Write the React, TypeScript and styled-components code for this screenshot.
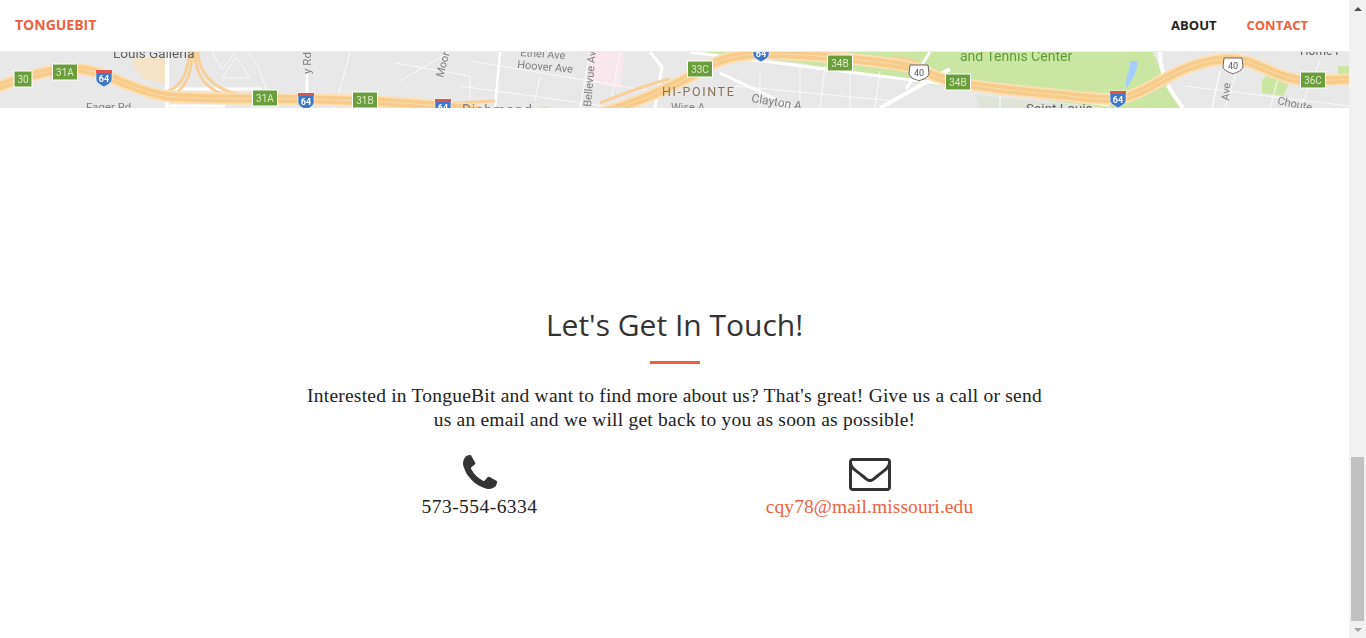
import styled, { createGlobalStyle } from 'styled-components';

const GlobalStyle = createGlobalStyle`
  html, body {
    margin: 0;
    height: 100%;
    overflow: hidden;
    background: #fff;
  }
`

const Page = styled.div`
  display: flex;
  width: 1366px;
  height: 638px;
  overflow: hidden;
`
const Main = styled.div`
  width: 1349px;
  display: flex;
  flex-direction: column;
`

// navbar
const Nav = styled.nav`
  height: 49px;
  padding: 0 41px 2px 15px;
  border-bottom: 1px solid #ececec;
  display: flex;
  align-items: center;
  justify-content: space-between;
  font-family: "Open Sans", sans-serif;
  font-weight: 700;
  font-size: 13px;
  text-transform: uppercase;
`
const Brand = styled.a`
  color: #f05f40;
  font-size: 14px;
`
const NavLinks = styled.ul`
  display: flex;
  gap: 30px;
  margin: 0;
  padding: 0;
  list-style: none;
`
const NavLink = styled.li<{ $active?: boolean }>`
  color: ${({ $active }) => ($active ? '#f05f40' : '#222')};
`

// map strip
const MapStrip = styled.svg`
  display: block;
  width: 1349px;
  height: 56px;
  flex: none;
  background: #e8e8e8;
  font-family: Roboto, sans-serif;
`
const MapSoft = styled.g`
  filter: blur(0.45px);
`

// contact section
const Contact = styled.section`
  display: flex;
  flex-direction: column;
  align-items: center;
  padding-top: 197px;
  color: #222;
`
const Title = styled.h2`
  margin: 0;
  font-family: "Open Sans", sans-serif;
  font-weight: 400;
  font-size: 30px;
  line-height: 40px;
  color: #333;
`
const Divider = styled.hr`
  width: 50px;
  height: 3px;
  margin: 16px 0 20px;
  border: 0;
  background: #f05f40;
`
const Lead = styled.p`
  margin: 0;
  width: 770px;
  text-align: center;
  font-family: "Liberation Serif", serif;
  font-size: 19.5px;
  line-height: 24px;
  letter-spacing: 0.22px;
`
const Columns = styled.div`
  display: grid;
  grid-template-columns: 390px 390px;
  margin-top: 21px;
`
const Column = styled.div`
  display: flex;
  flex-direction: column;
  align-items: center;
  font-family: "Liberation Serif", serif;
  font-size: 19.5px;
  line-height: 24px;
`
const IconSlot = styled.div<{ $lift?: number }>`
  height: 42px;
  box-sizing: border-box;
  padding-bottom: ${({ $lift }) => $lift || 0}px;
  display: flex;
  align-items: center;
  color: #333;
`
const IconSvg = styled.svg`
  display: block;
  fill: currentColor;
`
const PhoneNumber = styled.span`
  letter-spacing: 0.45px;
`
const MailLink = styled.a`
  color: #f05f40;
  letter-spacing: 0.1px;
`

// browser scrollbar
const Scrollbar = styled.aside`
  width: 17px;
  height: 638px;
  background: #f1f1f1;
  display: flex;
  flex-direction: column;
  align-items: center;
`
const ArrowCell = styled.div`
  height: 17px;
  display: flex;
  align-items: center;
  justify-content: center;
  flex: none;
`
const ArrowUp = styled.span`
  border-left: 4px solid transparent;
  border-right: 4px solid transparent;
  border-bottom: 4px solid #505050;
`
const ArrowDown = styled.span`
  border-left: 4px solid transparent;
  border-right: 4px solid transparent;
  border-top: 4px solid #a3a3a3;
`
const Track = styled.div`
  flex: 1;
  width: 100%;
  display: flex;
  justify-content: center;
  align-items: flex-end;
`
const Thumb = styled.div`
  width: 13px;
  height: 164px;
  background: #c1c1c1;
`

const PhoneGlyph = () => (
  <IconSvg width={34} height={34} viewBox="192 128 1408 1408">
    <path d="M1600 1240q0 27-10 70.5t-21 68.5q-21 50-122 106-94 51-186 51-27 0-52.5-3.5t-57.5-12.5-47.5-14.5-55.5-20.5-49-18q-98-35-175-83-128-79-264.5-215.5t-215.5-264.5q-48-77-83-175-3-9-18-49t-20.5-55.5-14.5-47.5-12.5-57.5-3.5-52.5q0-92 51-186 56-101 106-122 25-11 68.5-21t70.5-10q14 0 21 3 18 6 53 76 11 19 30 54t35 63.5 31 53.5q3 4 17.5 25t21.5 35.5 7 28.5q0 20-28.5 50t-62 55-62 53-28.5 46q0 9 5 22.5t8.5 20.5 14 24 11.5 19q76 137 174 235t235 174q2 1 19 11.5t24 14 20.5 8.5 22.5 5q18 0 46-28.5t53-62 55-62 50-28.5q14 0 28.5 7t35.5 21.5 25 17.5q25 15 53.5 31t63.5 35 54 30q70 35 76 53 3 7 3 21z" />
  </IconSvg>
)

const MailGlyph = () => (
  <IconSvg width={42} height={33} viewBox="0 128 1792 1408">
    <path d="M1664 1376v-768q-32 36-69 66-268 206-426 338-51 43-83 67t-86.5 48.5-102.5 24.5h-2q-48 0-102.5-24.5t-86.5-48.5-83-67q-158-132-426-338-37-30-69-66v768q0 13 9.5 22.5t22.5 9.5h1472q13 0 22.5-9.5t9.5-22.5zm0-1051v-24.5l-.5-13-3-12.5-5.5-9-9-7.5-14-2.5h-1472q-13 0-22.5 9.5t-9.5 22.5q0 168 147 284 193 152 401 317 6 5 35 29.5t46 37.5 44.5 31.5 50.5 27.5 43 9h2q20 0 43-9t50.5-27.5 44.5-31.5 46-37.5 35-29.5q208-165 401-317 54-43 100.5-115.5t46.5-131.5zm128-37v1088q0 66-47 113t-113 47h-1472q-66 0-113-47t-47-113v-1088q0-66 47-113t113-47h1472q66 0 113 47t47 113z" />
  </IconSvg>
)

// map data, coordinates are page pixels
const highways = [
  'M-5 87 C 20 78, 45 68, 75 68 C 105 68, 125 88, 165 95 C 200 99, 260 97, 305 98 C 360 100, 420 101, 480 110',
  'M600 112 C 640 102, 680 82, 715 62 C 740 50, 780 52, 830 56 C 870 60, 905 63, 925 70 C 945 84, 1000 88, 1060 94 C 1095 98, 1115 100, 1130 95 C 1160 84, 1180 62, 1225 58 C 1260 57, 1270 78, 1310 80 L 1355 78',
];
const ramps = [
  'M160 92 C 178 90, 188 76, 189 51',
  'M168 97 C 184 90, 192 76, 192 51',
  'M195 51 C 195 74, 205 90, 232 96',
  'M198 51 C 198 70, 212 88, 240 94',
  'M1126 96 C 1145 90, 1150 80, 1170 70',
  'M1165 84 C 1180 70, 1200 68, 1225 60',
  'M600 102 C 625 92, 650 82, 670 78',
  'M455 102 L 495 100',
  'M885 58 C 895 56, 905 56, 920 62',
];
const mainRoads: [string, number][] = [
  ['M167 51 V 107', 4],
  ['M172 88 H 262', 3],
  ['M170 105 H 225', 3],
  ['M307 72 V 107', 3],
  ['M500 51 L 495 107', 2.5],
  ['M650 51 L 662 66 L 655 107', 3],
  ['M690 51 L 1109 104', 3],
  ['M720 72 L 790 105', 3],
  ['M880 107 L 950 68', 4],
  ['M906 88 L 930 51', 3],
  ['M1160 51 C 1160 75, 1170 90, 1183 107', 4],
];
const sideRoads: [string, number][] = [
  ['M212 51 L 222 68 L 236 51', 1],
  ['M222 77 L 236 56 L 250 77 Z', 1],
  ['M248 51 C 258 62, 262 75, 266 88', 1],
  ['M350 51 L 335 107', 1],
  ['M395 62 L 470 75 L 470 100', 1],
  ['M400 80 L 450 51', 1],
  ['M470 60 L 650 90', 1],
  ['M460 85 L 640 110', 1],
  ['M540 75 L 535 100', 1],
  ['M590 51 L 580 107', 1.2],
  ['M620 51 L 612 95', 1],
  ['M760 70 V 107', 1],
  ['M800 65 V 107', 1],
  ['M825 65 L 820 107', 1],
  ['M850 68 V 107', 1],
  ['M880 70 L 875 107', 1],
  ['M735 85 L 895 100', 1],
  ['M1000 95 V 107', 1],
  ['M1220 70 L 1212 107', 1.5],
  ['M1185 85 L 1349 105', 1],
  ['M1240 58 L 1225 107', 1],
  ['M1280 70 L 1270 107', 1],
  ['M1320 60 L 1300 107', 1],
];
const greenSigns: [number, number, string][] = [
  [23, 78, '30'],
  [65, 71, '31A'],
  [265, 97, '31A'],
  [365, 99, '31B'],
  [700, 68, '33C'],
  [840, 62, '34B'],
  [958, 81, '34B'],
  [1313, 79, '36C'],
];
const interstates: [number, number][] = [
  [104, 77],
  [306, 100],
  [443, 106],
  [761, 52],
  [1118, 98],
];
const usShields: [number, number][] = [
  [919, 71],
  [1233, 64],
];

const MapLabel = styled.text<{ $color?: string; $size?: number; $spacing?: number }>`
  fill: ${({ $color }) => $color || '#808080'};
  font-size: ${({ $size }) => $size || 11}px;
  letter-spacing: ${({ $spacing }) => $spacing || 0}px;
`

const MapImage = () => (
  <MapStrip viewBox="0 51 1349 56">
    <MapSoft>
      {/* park and other land */}
      <polygon points="690,51 1153,51 1166,80 1183,107 1106,107 906,80 800,62" fill="#cbe6a3" />
      <polygon points="975,94 1106,107 980,107" fill="#e0e4d8" />
      <polygon points="1262,80 1270,70 1290,80 1283,95 1262,92" fill="#cbe6a3" />
      <polygon points="1338,65 1349,65 1349,78 1338,78" fill="#cbe6a3" />
      <polygon points="590,51 625,51 620,88 590,80" fill="#f8e8ee" />
      <polygon points="133,57 167,57 167,83 145,78 133,66" fill="#f5e3c8" />
      <polygon points="540,105 552,106 545,107" fill="#cbe6a3" />
      <path d="M1130 60 L 1137 60 C 1138 70, 1132 80, 1126 87 C 1125 78, 1130 70, 1130 60 Z" fill="#a3ccff" />

      {sideRoads.map(([d, w], i) => (
        <path key={i} d={d} stroke="#fafafa" strokeWidth={w} fill="none" />
      ))}
      {mainRoads.map(([d, w], i) => (
        <path key={i} d={d} stroke="#fff" strokeWidth={w} fill="none" />
      ))}

      {ramps.map((d, i) => (
        <path key={i} d={d} stroke="#f8cf96" strokeWidth={3} fill="none" />
      ))}
      {highways.map((d, i) => (
        <g key={i} fill="none">
          <path d={d} stroke="#fbdfb5" strokeWidth={12} />
          <path d={d} stroke="#f8cb8a" strokeWidth={8} />
          <path d={d} stroke="#fbdcae" strokeWidth={1} />
        </g>
      ))}

      <MapLabel x={113} y={57} $size={13.5} $color="#5f5f5f">Louis Galleria</MapLabel>
      <MapLabel x={86} y={110} $size={11.5}>Fager Rd</MapLabel>
      <MapLabel x={311} y={73} transform="rotate(-90 311 73)" $size={11.5}>y Rd</MapLabel>
      <MapLabel x={443} y={77} transform="rotate(-75 443 77)" $size={11}>Moorla</MapLabel>
      <MapLabel x={462} y={114} $size={14} $spacing={1}>Richmond</MapLabel>
      <MapLabel x={520} y={55} transform="rotate(4 520 55)" $size={11}>Ethel Ave</MapLabel>
      <MapLabel x={517} y={67} transform="rotate(5 517 67)" $size={11}>Hoover Ave</MapLabel>
      <MapLabel x={591} y={106} transform="rotate(-85 591 106)" $size={11}>Bellevue Ave</MapLabel>
      <MapLabel x={662} y={95} $size={12.5} $spacing={1.6} $color="#8a7358">HI-POINTE</MapLabel>
      <MapLabel x={751} y={101} transform="rotate(9 751 101)" $size={12}>Clayton A</MapLabel>
      <MapLabel x={671} y={110} $size={11}>Wise A</MapLabel>
      <MapLabel x={960} y={60} $size={14} $color="#5e9a3c">and Tennis Center</MapLabel>
      <MapLabel x={1026} y={112} $size={13.5} $color="#5f5f5f">Saint Louis</MapLabel>
      <MapLabel x={1229} y={100} transform="rotate(-85 1229 100)" $size={11}>Ave</MapLabel>
      <MapLabel x={1277} y={103} transform="rotate(12 1277 103)" $size={11}>Choute</MapLabel>
      <MapLabel x={1300} y={54} $size={12} $color="#5f5f5f">Home F</MapLabel>

      {greenSigns.map(([x, y, label]) => {
        const w = label.length > 2 ? 25 : 18;
        return (
          <g key={`${x}-${label}`}>
            <rect x={x - w / 2} y={y - 8} width={w} height={16} fill="#6a9e3d" stroke="#fff" strokeWidth={1} />
            <text x={x} y={y + 3.5} textAnchor="middle" fontSize={10} fill="#dcebc8">{label}</text>
          </g>
        );
      })}
      {interstates.map(([x, y]) => (
        <g key={x}>
          <path d={`M${x - 8} ${y - 8} H${x + 8} V${y + 1} C${x + 8} ${y + 5}, ${x + 3} ${y + 7}, ${x} ${y + 9} C${x - 3} ${y + 7}, ${x - 8} ${y + 5}, ${x - 8} ${y + 1} Z`} fill="#3d78c9" stroke="#fff" strokeWidth={0.6} />
          <rect x={x - 8} y={y - 8} width={16} height={3} fill="#d9534f" />
          <text x={x} y={y + 4} textAnchor="middle" fontSize={9} fontWeight={700} fill="#fff">64</text>
        </g>
      ))}
      {usShields.map(([x, y]) => (
        <g key={x}>
          <path d={`M${x - 9} ${y - 7} H${x + 9} L${x + 10} ${y + 2} C${x + 8} ${y + 7}, ${x + 3} ${y + 7}, ${x} ${y + 9} C${x - 3} ${y + 7}, ${x - 8} ${y + 7}, ${x - 10} ${y + 2} Z`} fill="#fff" stroke="#666" strokeWidth={1} />
          <text x={x} y={y + 4} textAnchor="middle" fontSize={9} fill="#555">40</text>
        </g>
      ))}
    </MapSoft>
  </MapStrip>
)

const App: React.FC = () => {
  return (
    <Page>
      <GlobalStyle />
      <Main>
        <Nav>
          <Brand>TongueBit</Brand>
          <NavLinks>
            <NavLink>About</NavLink>
            <NavLink $active>Contact</NavLink>
          </NavLinks>
        </Nav>
        <MapImage />
        <Contact>
          <Title>Let's Get In Touch!</Title>
          <Divider />
          <Lead>
            Interested in TongueBit and want to find more about us? That's great! Give us a call or send
            <br />
            us an email and we will get back to you as soon as possible!
          </Lead>
          <Columns>
            <Column>
              <IconSlot $lift={4}><PhoneGlyph /></IconSlot>
              <PhoneNumber>573-554-6334</PhoneNumber>
            </Column>
            <Column>
              <IconSlot><MailGlyph /></IconSlot>
              <MailLink>cqy78@mail.missouri.edu</MailLink>
            </Column>
          </Columns>
        </Contact>
      </Main>
      <Scrollbar>
        <ArrowCell><ArrowUp /></ArrowCell>
        <Track><Thumb /></Track>
        <ArrowCell><ArrowDown /></ArrowCell>
      </Scrollbar>
    </Page>
  );
}

export default App;
